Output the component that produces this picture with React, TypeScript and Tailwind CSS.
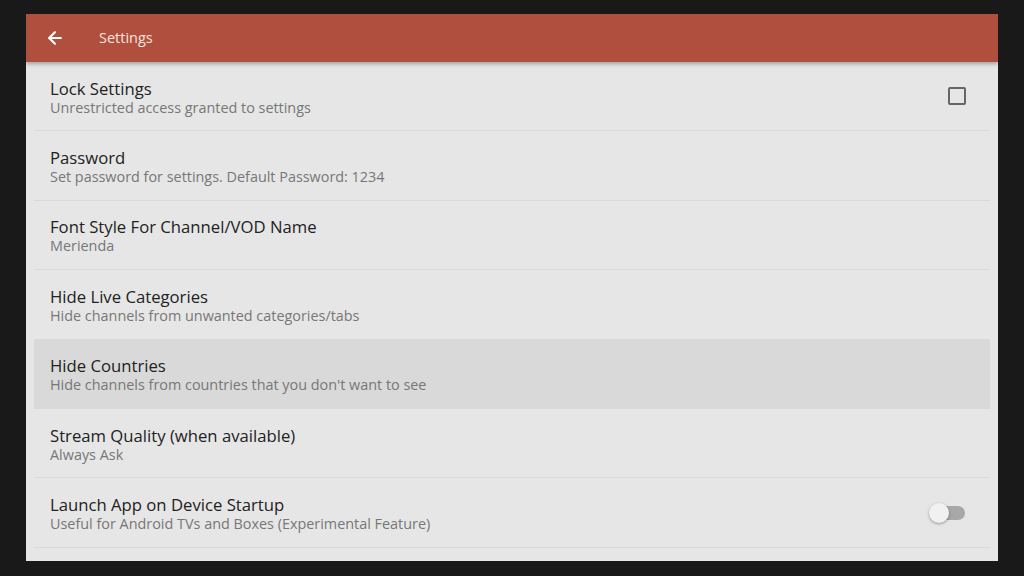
import { ArrowLeft } from "lucide-react"

interface SettingRow {
  title: string
  subtitle: string
  control?: "checkbox" | "switch"
  active?: boolean
}

const rows: SettingRow[] = [
  { title: "Lock Settings", subtitle: "Unrestricted access granted to settings", control: "checkbox" },
  { title: "Password", subtitle: "Set password for settings. Default Password: 1234" },
  { title: "Font Style For Channel/VOD Name", subtitle: "Merienda" },
  { title: "Hide Live Categories", subtitle: "Hide channels from unwanted categories/tabs" },
  { title: "Hide Countries", subtitle: "Hide channels from countries that you don't want to see", active: true },
  { title: "Stream Quality (when available)", subtitle: "Always Ask" },
  { title: "Launch App on Device Startup", subtitle: "Useful for Android TVs and Boxes (Experimental Feature)", control: "switch" },
]

function Row({ row }: { row: SettingRow }) {
  return (
    <div
      className={`flex h-[69.4px] items-center border-b border-[#dadada] px-4 ${
        row.active ? "bg-[#d9d9d9]" : ""
      }`}
    >
      <div className="flex-1 pt-[3px]">
        <div className="text-[16.7px] leading-[20px] text-[#222222]">{row.title}</div>
        <div className="text-[14.4px] leading-[18px] text-[#777777]">{row.subtitle}</div>
      </div>
      {row.control === "checkbox" && (
        <div className="mr-2 h-[18px] w-[18px] rounded-[2px] border-2 border-[#666666]" />
      )}
      {row.control === "switch" && (
        <div className="relative mr-[9px] h-[14px] w-[32px] rounded-full bg-[#a8a8a8]">
          <div className="absolute left-[-4px] top-[-3px] h-[20px] w-[20px] rounded-full bg-[#f1f1f1] shadow-[0_1px_3px_rgba(0,0,0,0.35)]" />
        </div>
      )}
    </div>
  )
}

export default function App() {
  return (
    <div
      className="flex h-[576px] w-[1024px] flex-col bg-[#191919] px-[26px] pt-[14px]"
      style={{ fontFamily: "'Open Sans', 'Noto Sans', sans-serif" }}
    >
      <div className="flex h-[547px] flex-col overflow-hidden bg-[#e6e6e6]">
        <div className="relative z-10 flex h-[48px] shrink-0 items-center bg-[#b04f3e] pl-[19px] shadow-[0_2px_4px_rgba(0,0,0,0.3)]">
          <ArrowLeft className="h-[20px] w-[20px] text-white" strokeWidth={2.5} />
          <span className="ml-[34px] text-[14.5px] text-[#f7e4df]">Settings</span>
        </div>
        <div className="px-2">
          {rows.map((row) => (
            <Row key={row.title} row={row} />
          ))}
        </div>
      </div>
    </div>
  )
}
